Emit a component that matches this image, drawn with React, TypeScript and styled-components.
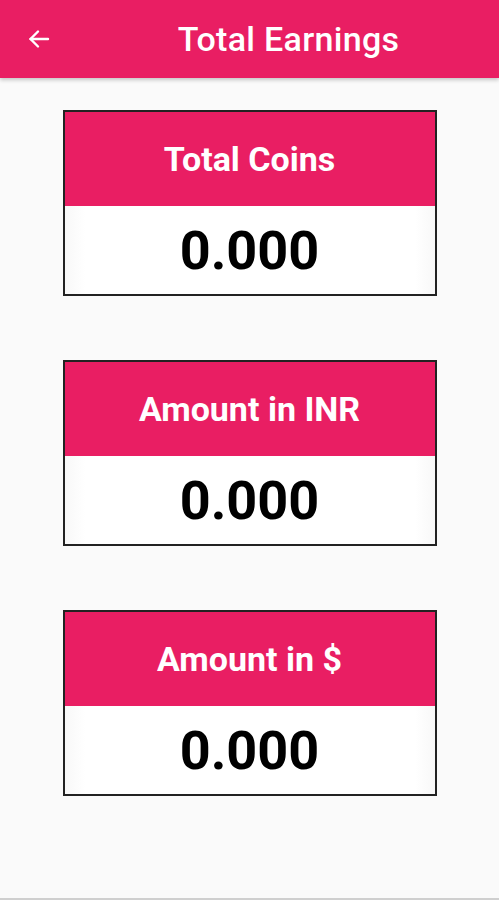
import React from "react";
import styled, { createGlobalStyle } from "styled-components";

const Global = createGlobalStyle`
  html, body { margin: 0; padding: 0; background: #fafafa; }
  body { font-family: Roboto, "Noto Sans", sans-serif; }
  * { box-sizing: border-box; }
`;

const Page = styled.div`
  height: 900px;
  display: flex;
  flex-direction: column;
  background: #fafafa;
  border-bottom: 2px solid #cfcfcf;
`;

const AppBar = styled.header`
  height: 78px;
  flex: none;
  display: flex;
  align-items: center;
  background: #e91e63;
  box-shadow: 0 2px 4px rgba(0, 0, 0, 0.22);
  position: relative;
  z-index: 1;
`;

const NavButton = styled.button`
  width: 78px;
  height: 78px;
  flex: none;
  display: flex;
  align-items: center;
  justify-content: center;
  background: none;
  border: none;
  padding: 0;
  color: #fff;
`;

const Title = styled.h1`
  flex: 1;
  margin: 0;
  text-align: center;
  color: #fff;
  font-family: Roboto, sans-serif;
  font-weight: 500;
  font-size: 34px;
  letter-spacing: 0.3px;
`;

const Content = styled.main`
  display: flex;
  flex-direction: column;
  align-items: center;
  gap: 64px;
  padding-top: 32px;
`;

const Card = styled.section`
  width: 374px;
  border: 2px solid #222;
  background: #fff;
  display: flex;
  flex-direction: column;
`;

const CardHead = styled.div`
  height: 94px;
  background: #e91e63;
  display: flex;
  align-items: center;
  justify-content: center;
  color: #fff;
  font-family: Roboto, sans-serif;
  font-weight: 700;
  font-size: 34px;
`;

const CardValue = styled.div`
  height: 88px;
  display: flex;
  align-items: center;
  justify-content: center;
  color: #000;
  font-family: Roboto, sans-serif;
  font-weight: 700;
  font-size: 54px;
  background: linear-gradient(
    to right,
    #f8f8f8 0,
    #fff 20px,
    #fff calc(100% - 20px),
    #f8f8f8 100%
  );
`;

const items = [
  { label: "Total Coins", value: "0.000" },
  { label: "Amount in INR", value: "0.000" },
  { label: "Amount in $", value: "0.000" },
];

export default function App() {
  return (
    <>
      <Global />
      <Page>
        <AppBar>
          <NavButton aria-label="Back">
            <svg width="24" height="24" viewBox="0 0 24 24" fill="none" stroke="#fff" strokeWidth="2.4" strokeLinecap="round" strokeLinejoin="round">
              <path d="M21 12H3.5" />
              <path d="M11 4.5L3.5 12L11 19.5" />
            </svg>
          </NavButton>
          <Title>Total Earnings</Title>
        </AppBar>
        <Content>
          {items.map((it) => (
            <Card key={it.label}>
              <CardHead>{it.label}</CardHead>
              <CardValue>{it.value}</CardValue>
            </Card>
          ))}
        </Content>
      </Page>
    </>
  );
}
